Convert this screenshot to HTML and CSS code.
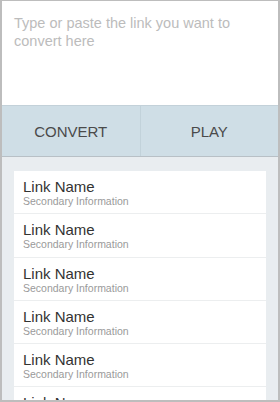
FILE: index.html
```html
<!DOCTYPE html>
<html>
<head>
<meta charset="utf-8">
<link rel="stylesheet" href="styles.css">
</head>
<body>
<div class="frame">
  <div class="input">Type or paste the link you want to convert here</div>
  <div class="actions">
    <div class="btn">CONVERT</div>
    <div class="btn">PLAY</div>
  </div>
  <div class="list-area">
    <ul class="list">
      <li class="item"><div class="name">Link Name</div><div class="sub">Secondary Information</div></li>
      <li class="item"><div class="name">Link Name</div><div class="sub">Secondary Information</div></li>
      <li class="item"><div class="name">Link Name</div><div class="sub">Secondary Information</div></li>
      <li class="item"><div class="name">Link Name</div><div class="sub">Secondary Information</div></li>
      <li class="item"><div class="name">Link Name</div><div class="sub">Secondary Information</div></li>
      <li class="item"><div class="name">Link Name</div><div class="sub">Secondary Information</div></li>
    </ul>
  </div>
</div>
</body>
</html>
```
FILE: styles.css
```css
html, body {
  margin: 0;
  padding: 0;
  width: 280px;
  height: 402px;
  overflow: hidden;
  background: #fff;
  font-family: "Liberation Sans", Arial, sans-serif;
}
.frame {
  box-sizing: border-box;
  width: 280px;
  height: 402px;
  border: 1px solid #bdbdbd;
  border-left-width: 2px;
  border-right-width: 2px;
  border-bottom-width: 2px;
  display: flex;
  flex-direction: column;
  overflow: hidden;
}
.input {
  height: 104px;
  flex: none;
  box-sizing: border-box;
  padding: 13px 24px 0 12px;
  font-size: 14.5px;
  line-height: 18px;
  color: #bcbcbc;
  background: #fff;
}
.actions {
  flex: none;
  height: 50px;
  display: flex;
  background: #cfdee6;
  border-top: 1px solid #c3d1d9;
  border-bottom: 1px solid #b8c0c6;
}
.btn {
  flex: 1;
  display: flex;
  align-items: center;
  justify-content: center;
  font-size: 15px;
  color: #4a4a4a;
  padding-top: 1px;
}
.btn + .btn {
  border-left: 1px solid #c2d2da;
}
.list-area {
  flex: 1;
  background: #e9edf0;
  padding: 14px 12px 0 12px;
  overflow: hidden;
}
.list {
  list-style: none;
  margin: 0;
  padding: 0;
  background: #fff;
}
.item {
  box-sizing: border-box;
  height: 43.3px;
  padding: 7px 9px 0 9px;
  border-bottom: 1px solid #eceeef;
}
.name {
  font-size: 15px;
  line-height: 17px;
  color: #333;
}
.sub {
  font-size: 10.5px;
  line-height: 12px;
  color: #9a9a9a;
}
```
